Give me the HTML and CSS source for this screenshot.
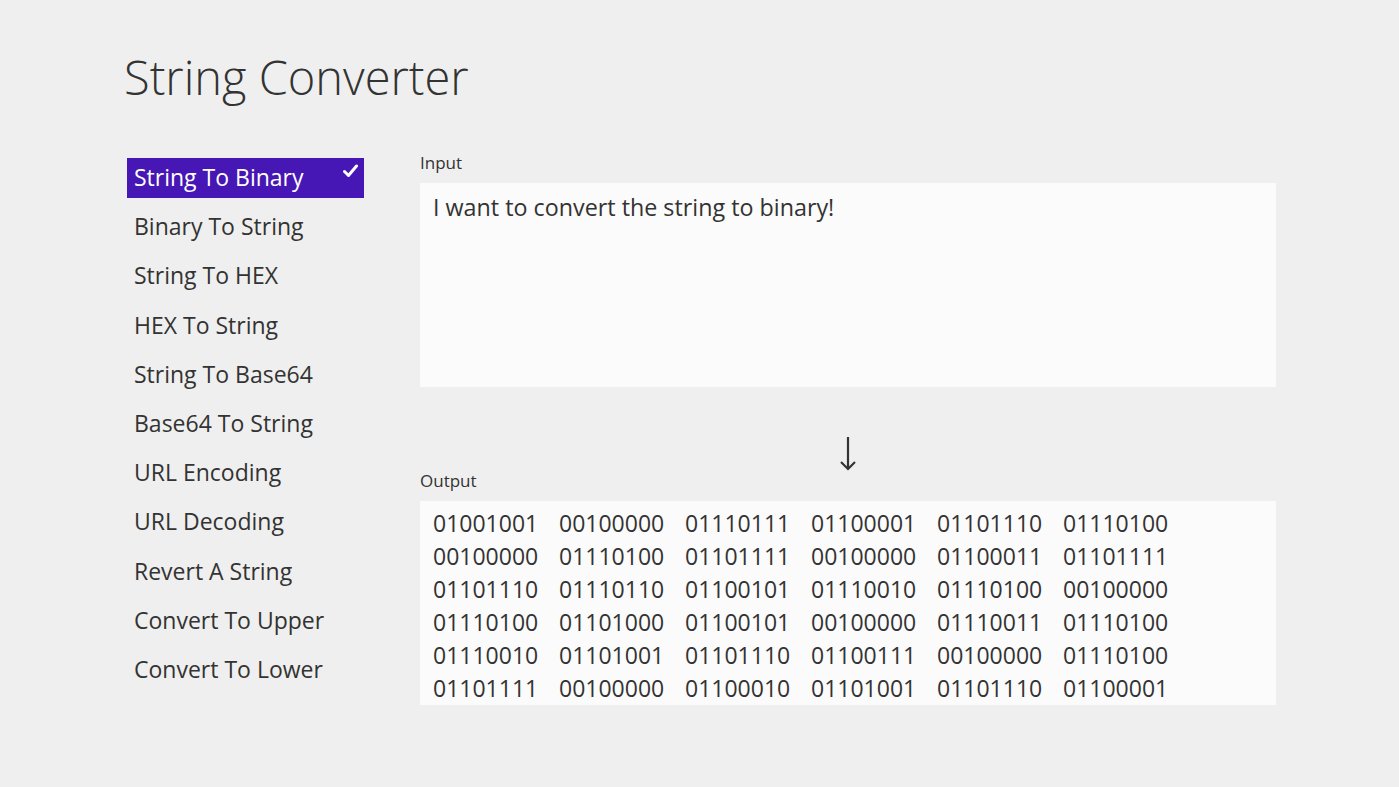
FILE: index.html
```html
<!DOCTYPE html>
<html>
<head>
<meta charset="utf-8">
<link rel="stylesheet" href="styles.css">
</head>
<body>
<div class="app">
  <h1 class="title">String Converter</h1>
  <div class="main">
    <ul class="menu">
      <li class="item selected">String To Binary
        <svg class="check" width="15" height="14" viewBox="0 0 15 14"><path d="M1.5 7.5 L5.5 11.5 L13.5 2" fill="none" stroke="#fff" stroke-width="3" stroke-linecap="round" stroke-linejoin="round"/></svg>
      </li>
      <li class="item">Binary To String</li>
      <li class="item">String To HEX</li>
      <li class="item">HEX To String</li>
      <li class="item">String To Base64</li>
      <li class="item">Base64 To String</li>
      <li class="item">URL Encoding</li>
      <li class="item">URL Decoding</li>
      <li class="item">Revert A String</li>
      <li class="item">Convert To Upper</li>
      <li class="item">Convert To Lower</li>
    </ul>
    <div class="content">
      <div class="label">Input</div>
      <div class="box input">I want to convert the string to binary!</div>
      <div class="arrow-row">
        <svg class="arrow" width="18" height="36" viewBox="0 0 18 36"><path d="M9 1 V33 M2 26 L9 33 L16 26" fill="none" stroke="#333" stroke-width="2.2"/></svg>
      </div>
      <div class="label">Output</div>
      <div class="box output">
        <span>01001001</span><span>00100000</span><span>01110111</span><span>01100001</span><span>01101110</span><span>01110100</span>
        <span>00100000</span><span>01110100</span><span>01101111</span><span>00100000</span><span>01100011</span><span>01101111</span>
        <span>01101110</span><span>01110110</span><span>01100101</span><span>01110010</span><span>01110100</span><span>00100000</span>
        <span>01110100</span><span>01101000</span><span>01100101</span><span>00100000</span><span>01110011</span><span>01110100</span>
        <span>01110010</span><span>01101001</span><span>01101110</span><span>01100111</span><span>00100000</span><span>01110100</span>
        <span>01101111</span><span>00100000</span><span>01100010</span><span>01101001</span><span>01101110</span><span>01100001</span>
      </div>
    </div>
  </div>
</div>
</body>
</html>
```

FILE: styles.css
```css
html, body {
  margin: 0;
  padding: 0;
  background: #efefef;
  height: 100%;
}
body {
  font-family: "Open Sans", "Noto Sans", sans-serif;
  color: #333333;
}
.app {
  padding: 47px 0 0 124px;
}
.title {
  margin: 0;
  font-size: 47px;
  font-weight: 300;
  line-height: 60px;
  color: #333333;
  letter-spacing: 0;
}
.main {
  display: flex;
  margin-top: 51px;
}
.menu {
  list-style: none;
  margin: 0 0 0 3px;
  padding: 0;
  width: 237px;
  display: flex;
  flex-direction: column;
  gap: 9.2px;
}
.item {
  position: relative;
  height: 40px;
  line-height: 38px;
  padding-left: 7px;
  font-size: 23px;
  color: #333333;
}
.item.selected {
  background: #4617b4;
  color: #ffffff;
}
.check {
  position: absolute;
  right: 6px;
  top: 6px;
}
.content {
  margin-left: 56px;
  width: 856px;
  margin-top: -5px;
}
.label {
  font-size: 17px;
  line-height: 20px;
  margin-bottom: 10px;
  color: #333333;
}
.box {
  background: #fbfbfb;
  height: 204px;
  box-sizing: border-box;
}
.input {
  padding: 8px 13px;
  font-size: 23.3px;
  line-height: 33px;
}
.arrow-row {
  height: 84px;
  display: flex;
  justify-content: center;
  align-items: flex-start;
  padding-top: 49px;
  box-sizing: border-box;
}
.output {
  padding: 6px 13px;
  display: grid;
  grid-template-columns: repeat(6, 126px);
  grid-auto-rows: 33px;
  font-size: 23px;
  line-height: 33px;
}
```
